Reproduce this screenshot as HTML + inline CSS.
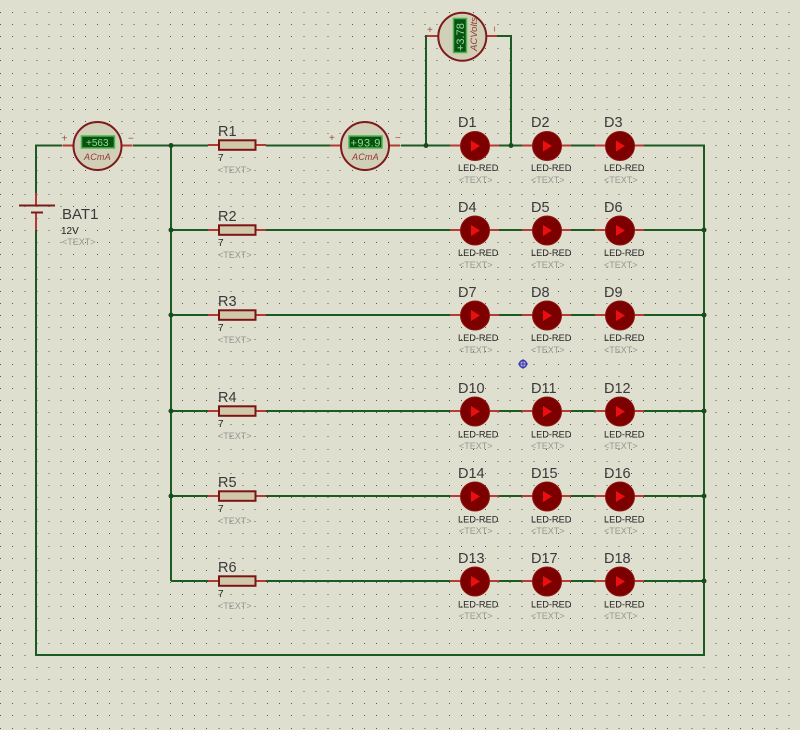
<!DOCTYPE html>
<html>
<head>
<meta charset="utf-8">
<title>Schematic</title>
<style>
html,body{margin:0;padding:0;width:800px;height:730px;overflow:hidden;background:#dfdfd0}
svg{display:block;filter:blur(.3px)}
text{font-family:"Liberation Sans",sans-serif}
.n{font-size:14.500px;fill:#3a3a3a}
.v{font-size:10px;fill:#222}
.t{font-size:9px;fill:#96968f}
.l{font-size:9.200px;fill:#222}
.m{font-size:10px;fill:#8fe08f}
.u{font-size:9px;font-style:italic;fill:#8e3a30}
.s{font-size:10px;fill:#a04a3a}
</style>
</head>
<body>
<svg width="800" height="730" viewBox="0 0 800 730" xmlns="http://www.w3.org/2000/svg">
<defs>
<g id="led">
<path d="M-25 0H-14M14 0H24" stroke="#b83a32" stroke-width="2" fill="none"/>
<circle r="14.500" cy=".5" fill="#7c0000" stroke="#8f1410" stroke-width="1"/>
<path d="M-4-5L5 .5L-4 6Z" fill="#ea1010"/>
</g>
<g id="res">
<path d="M208 0H218M255 0H266" stroke="#b03a32" stroke-width="2" fill="none"/>
<rect x="219" y="-4.700" width="36.500" height="9.500" fill="#d0c8aa" stroke="#7d1414" stroke-width="2"/>
</g>
<g id="meter">
<path d="M-35-0.5H-24M24-0.5H35" stroke="#b03a32" stroke-width="2" fill="none"/>
<circle r="24" fill="#d2cfb8" stroke="#7d1a1a" stroke-width="2"/>
</g>
</defs>

<rect width="800" height="730" fill="#dfdfd0"/>
<path fill="none" stroke="#5a5a52" stroke-width="1" stroke-dasharray="1 11.13" shape-rendering="crispEdges"
d="M0 12.5H800M0 24.5H800M0 36.5H800M0 48.5H800M0 60.5H800M0 73.5H800M0 85.5H800M0 97.5H800M0 109.5H800M0 121.5H800M0 133.5H800M0 145.5H800M0 157.5H800M0 170.5H800M0 182.5H800M0 194.5H800M0 206.5H800M0 218.5H800M0 230.5H800M0 242.5H800M0 254.5H800M0 267.5H800M0 279.5H800M0 291.5H800M0 303.5H800M0 315.5H800M0 327.5H800M0 339.5H800M0 351.5H800M0 364.5H800M0 376.5H800M0 388.5H800M0 400.5H800M0 412.5H800M0 424.5H800M0 436.5H800M0 449.5H800M0 461.5H800M0 473.5H800M0 485.5H800M0 497.5H800M0 509.5H800M0 521.5H800M0 533.5H800M0 546.5H800M0 558.5H800M0 570.5H800M0 582.5H800M0 594.5H800M0 606.5H800M0 618.5H800M0 630.5H800M0 643.5H800M0 655.5H800M0 667.5H800M0 679.5H800M0 691.5H800M0 703.5H800M0 715.5H800M0 728.5H800"/>

<!-- wires -->
<g fill="none" stroke="#1c5a24" stroke-width="2">
<path d="M36 193V145.500H62M133 145.500H208M266 145.500H330M401 145.500H704V655H36V230"/>
<path d="M171 145V581M171 230H208M171 315H208M171 411H208M171 496H208M171 581H208"/>
<path d="M266 230H704M266 315H704M266 411H704M266 496H704M266 581H704"/>
<path d="M426 145V36H427M511 145V36H497"/>
</g>
<g fill="#174d1e">
<circle cx="171" cy="145.500" r="2.500"/><circle cx="171" cy="230" r="2.500"/><circle cx="171" cy="315" r="2.500"/><circle cx="171" cy="411" r="2.500"/><circle cx="171" cy="496" r="2.500"/>
<circle cx="426" cy="145.500" r="2.500"/><circle cx="511" cy="145.500" r="2.500"/>
<circle cx="704" cy="230" r="2.500"/><circle cx="704" cy="315" r="2.500"/><circle cx="704" cy="411" r="2.500"/><circle cx="704" cy="496" r="2.500"/><circle cx="704" cy="581" r="2.500"/>
</g>

<!-- battery -->
<path d="M36 193V205.500M36 212.500V230" stroke="#b03a32" stroke-width="2" fill="none"/>
<path d="M19 205.500H55M31 212.500H43" stroke="#7a1c1c" stroke-width="2" fill="none"/>
<text class="n" x="62" y="219" style="font-size:15px">BAT1</text>
<text class="v" x="61" y="234">12V</text>
<text class="t" x="62" y="245">&lt;TEXT&gt;</text>

<!-- meter 1 -->
<use href="#meter" x="97.500" y="146"/>
<rect x="81.500" y="136" width="33" height="12" fill="#0a5214" stroke="#4ab84a" stroke-width="1.500"/>
<text class="m" x="86" y="146">+563</text>
<text class="u" x="84" y="160" style="letter-spacing:.2px">ACmA</text>
<text class="s" x="61.500" y="141.500">+</text>
<text class="s" x="128" y="141.500">−</text>

<!-- meter 2 -->
<use href="#meter" x="365" y="146"/>
<rect x="349" y="136" width="33" height="12" fill="#0a5214" stroke="#4ab84a" stroke-width="1.500"/>
<text class="m" x="350.500" y="146.500" style="font-size:11px;letter-spacing:.5px">+93.9</text>
<text class="u" x="352" y="160" style="letter-spacing:.2px">ACmA</text>
<text class="s" x="329" y="141">+</text>
<text class="s" x="395" y="141">−</text>

<!-- voltmeter -->
<g>
<path d="M427 36H438M486 36H497" stroke="#b03a32" stroke-width="2" fill="none"/>
<circle cx="462.300" cy="36.700" r="24" fill="#d2cfb8" stroke="#7d1a1a" stroke-width="2"/>
<rect x="453.500" y="18.500" width="13" height="34" fill="#0a5214" stroke="#4ab84a" stroke-width="1.500"/>
<text class="m" transform="translate(464 51) rotate(-90)" style="font-size:11px">+3.78</text>
<text class="u" transform="translate(477 51) rotate(-90)" style="font-size:9.500px">ACVolts</text>
<text class="s" x="427" y="33">+</text>
<text class="s" transform="translate(498 32) rotate(-90)">−</text>
</g>

<!-- resistors -->
<use href="#res" y="145"/><use href="#res" y="230"/><use href="#res" y="315"/><use href="#res" y="411"/><use href="#res" y="496"/><use href="#res" y="581"/>
<text class="n" x="218" y="136">R1</text><text class="v" x="218" y="161">7</text><text class="t" x="218" y="173">&lt;TEXT&gt;</text>
<text class="n" x="218" y="221">R2</text><text class="v" x="218" y="246">7</text><text class="t" x="218" y="258">&lt;TEXT&gt;</text>
<text class="n" x="218" y="306">R3</text><text class="v" x="218" y="331">7</text><text class="t" x="218" y="343">&lt;TEXT&gt;</text>
<text class="n" x="218" y="402">R4</text><text class="v" x="218" y="427">7</text><text class="t" x="218" y="439">&lt;TEXT&gt;</text>
<text class="n" x="218" y="487">R5</text><text class="v" x="218" y="512">7</text><text class="t" x="218" y="524">&lt;TEXT&gt;</text>
<text class="n" x="218" y="572">R6</text><text class="v" x="218" y="597">7</text><text class="t" x="218" y="609">&lt;TEXT&gt;</text>

<!-- LEDs -->
<use href="#led" x="475" y="145.500"/><use href="#led" x="547" y="145.500"/><use href="#led" x="620" y="145.500"/>
<use href="#led" x="475" y="230"/><use href="#led" x="547" y="230"/><use href="#led" x="620" y="230"/>
<use href="#led" x="475" y="315"/><use href="#led" x="547" y="315"/><use href="#led" x="620" y="315"/>
<use href="#led" x="475" y="411"/><use href="#led" x="547" y="411"/><use href="#led" x="620" y="411"/>
<use href="#led" x="475" y="496"/><use href="#led" x="547" y="496"/><use href="#led" x="620" y="496"/>
<use href="#led" x="475" y="581"/><use href="#led" x="547" y="581"/><use href="#led" x="620" y="581"/>

<text class="n" x="458" y="127">D1</text><text class="n" x="531" y="127">D2</text><text class="n" x="604" y="127">D3</text>
<text class="l" x="458" y="171">LED-RED</text><text class="l" x="531" y="171">LED-RED</text><text class="l" x="604" y="171">LED-RED</text>
<text class="t" x="459" y="183">&lt;TEXT&gt;</text><text class="t" x="531" y="183">&lt;TEXT&gt;</text><text class="t" x="604" y="183">&lt;TEXT&gt;</text>

<text class="n" x="458" y="212">D4</text><text class="n" x="531" y="212">D5</text><text class="n" x="604" y="212">D6</text>
<text class="l" x="458" y="256">LED-RED</text><text class="l" x="531" y="256">LED-RED</text><text class="l" x="604" y="256">LED-RED</text>
<text class="t" x="459" y="268">&lt;TEXT&gt;</text><text class="t" x="531" y="268">&lt;TEXT&gt;</text><text class="t" x="604" y="268">&lt;TEXT&gt;</text>

<text class="n" x="458" y="297">D7</text><text class="n" x="531" y="297">D8</text><text class="n" x="604" y="297">D9</text>
<text class="l" x="458" y="341">LED-RED</text><text class="l" x="531" y="341">LED-RED</text><text class="l" x="604" y="341">LED-RED</text>
<text class="t" x="459" y="353">&lt;TEXT&gt;</text><text class="t" x="531" y="353">&lt;TEXT&gt;</text><text class="t" x="604" y="353">&lt;TEXT&gt;</text>

<text class="n" x="458" y="393">D10</text><text class="n" x="531" y="393">D11</text><text class="n" x="604" y="393">D12</text>
<text class="l" x="458" y="437.500">LED-RED</text><text class="l" x="531" y="437.500">LED-RED</text><text class="l" x="604" y="437.500">LED-RED</text>
<text class="t" x="459" y="449">&lt;TEXT&gt;</text><text class="t" x="531" y="449">&lt;TEXT&gt;</text><text class="t" x="604" y="449">&lt;TEXT&gt;</text>

<text class="n" x="458" y="478">D14</text><text class="n" x="531" y="478">D15</text><text class="n" x="604" y="478">D16</text>
<text class="l" x="458" y="522.500">LED-RED</text><text class="l" x="531" y="522.500">LED-RED</text><text class="l" x="604" y="522.500">LED-RED</text>
<text class="t" x="459" y="534">&lt;TEXT&gt;</text><text class="t" x="531" y="534">&lt;TEXT&gt;</text><text class="t" x="604" y="534">&lt;TEXT&gt;</text>

<text class="n" x="458" y="563">D13</text><text class="n" x="531" y="563">D17</text><text class="n" x="604" y="563">D18</text>
<text class="l" x="458" y="607.500">LED-RED</text><text class="l" x="531" y="607.500">LED-RED</text><text class="l" x="604" y="607.500">LED-RED</text>
<text class="t" x="459" y="619">&lt;TEXT&gt;</text><text class="t" x="531" y="619">&lt;TEXT&gt;</text><text class="t" x="604" y="619">&lt;TEXT&gt;</text>

<!-- origin marker -->
<circle cx="523" cy="364" r="3.500" fill="#b8b8dc" stroke="#3a3ab0" stroke-width="1.500"/>
<path d="M518 364H528M523 359V369" stroke="#3a3ab0" stroke-width="1"/>
</svg>
</body>
</html>
